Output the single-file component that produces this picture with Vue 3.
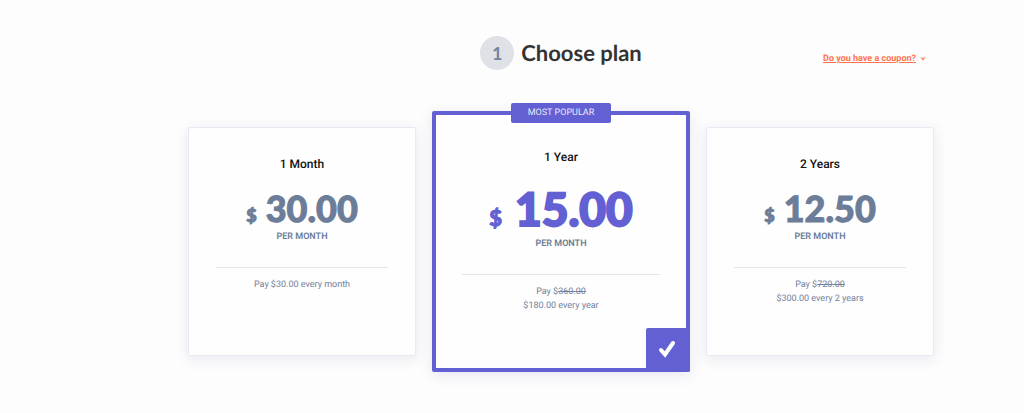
<script setup>
import { ref } from 'vue'

const plans = [
  { id: 'month', title: '1 Month', price: '30.00', line: 'Pay $30.00 every month' },
  { id: 'year', title: '1 Year', price: '15.00', was: '360.00', line: '$180.00 every year', popular: true },
  { id: 'years', title: '2 Years', price: '12.50', was: '720.00', line: '$300.00 every 2 years' }
]
const selected = ref('year')
</script>

<template>
  <main class="page">
    <div class="content">
      <header class="head">
        <h1 id="plan-title" class="title"><span class="step">1</span>Choose plan</h1>
        <a class="coupon" href="#coupon">
          <span class="coupon-text">Do you have a coupon?</span>
          <svg class="chevron" viewBox="0 0 6 4" aria-hidden="true"><path d="M.3.3Q3 1.200 5.700.3L3 3.800Z" /></svg>
        </a>
      </header>
      <div class="plans" role="radiogroup" aria-labelledby="plan-title">
        <label v-for="plan in plans" :key="plan.id" class="card" :class="{ popular: plan.popular, selected: selected === plan.id }">
          <input v-model="selected" class="choice" type="radio" name="plan" :value="plan.id" />
          <span v-if="plan.popular" class="badge">MOST POPULAR</span>
          <span class="name">{{ plan.title }}</span>
          <span class="price"><span class="currency">$</span><span class="amount">{{ plan.price }}</span></span>
          <span class="per">PER MONTH</span>
          <span class="billing">
            <span v-if="plan.was">Pay $<s>{{ plan.was }}</s></span>
            <span>{{ plan.line }}</span>
          </span>
          <span v-if="selected === plan.id" class="tick">
            <svg viewBox="0 0 18 18" aria-hidden="true"><path d="M3 10 7 14.500 15 3" /></svg>
          </span>
        </label>
      </div>
    </div>
  </main>
</template>

<style>
body {
  margin: 0;
  background: #fdfdfd;
}
</style>

<style scoped>
.page {
  padding: 36px 0 40px 98px;
  font-family: Roboto, "Liberation Sans", sans-serif;
  text-rendering: geometricPrecision;
}
.content {
  max-width: 746px;
  margin: 0 auto;
}
.head {
  display: grid;
  grid-template-columns: 1fr auto 1fr;
  align-items: center;
}
.title {
  grid-column: 2;
  display: flex;
  align-items: center;
  gap: 7px;
  margin: 0;
  color: #333;
  font: 700 22px/34px Lato, sans-serif;
}
.step {
  width: 34px;
  height: 34px;
  border-radius: 50%;
  background: #dee1e6;
  color: #7484a0;
  font-size: 18px;
  text-align: center;
}
.coupon {
  justify-self: end;
  display: flex;
  align-items: center;
  gap: 4px;
  padding: 12px 8px 0 0;
  color: #ff7350;
  font-size: 9px;
  font-weight: 700;
  line-height: 14px;
  text-decoration: none;
}
.coupon-text {
  text-decoration: underline;
}
.chevron {
  width: 6px;
  height: 4px;
  fill: currentColor;
  opacity: 0.8;
}
.plans {
  display: grid;
  grid-template-columns: 228fr 258fr 228fr;
  gap: 16px;
  align-items: center;
  margin-top: 41px;
}
.card {
  position: relative;
  box-sizing: border-box;
  display: flex;
  flex-direction: column;
  align-items: center;
  min-height: 229px;
  padding: 27px;
  border: 1px solid #e9e9f3;
  border-radius: 2px;
  background: #fefefe;
  box-shadow: 0 3px 14px rgba(70, 75, 150, 0.12);
  cursor: pointer;
}
.popular {
  min-height: 261px;
  padding: 33px 26px;
}
.selected {
  border: 4px solid #6260d2;
}
.choice {
  position: absolute;
  opacity: 0;
}
.badge {
  position: absolute;
  top: -12px;
  padding: 0 17px;
  border-radius: 2px;
  background: #6260d2;
  color: #e9e9fb;
  font-size: 9px;
  line-height: 20px;
}
.name {
  color: #111;
  font-size: 12px;
  font-weight: 500;
  line-height: 18px;
}
.price {
  display: flex;
  align-items: baseline;
  gap: 9px;
  margin-top: 18px;
  color: #6b7d98;
  font: 900 36px/35px Lato, sans-serif;
  -webkit-text-stroke: 1px currentColor;
}
.currency {
  font-size: 18px;
  line-height: 1;
}
.popular .price {
  gap: 13px;
  color: #6260d2;
  font-size: 46px;
  line-height: 49px;
  -webkit-text-stroke-width: 2px;
}
.popular .currency {
  font-size: 22px;
  line-height: 1;
  -webkit-text-stroke-width: 1px;
}
.per {
  margin-top: 4px;
  color: #6b7d98;
  font-size: 9px;
  font-weight: 600;
  line-height: 14px;
}
.billing {
  display: flex;
  flex-direction: column;
  align-self: stretch;
  margin-top: 23px;
  padding-top: 10px;
  border-top: 1px solid #e6e6e9;
  color: #72819b;
  font-size: 9px;
  line-height: 14px;
  text-align: center;
}
.tick {
  position: absolute;
  right: -4px;
  bottom: -4px;
  display: flex;
  align-items: center;
  justify-content: center;
  box-sizing: border-box;
  width: 44px;
  height: 44px;
  padding: 0 3px 3px 0;
  border-radius: 2px;
  background: #6260d2;
}
.tick svg {
  width: 18px;
  height: 18px;
  fill: none;
  stroke: #fff;
  stroke-width: 4;
  stroke-linecap: round;
}
</style>
